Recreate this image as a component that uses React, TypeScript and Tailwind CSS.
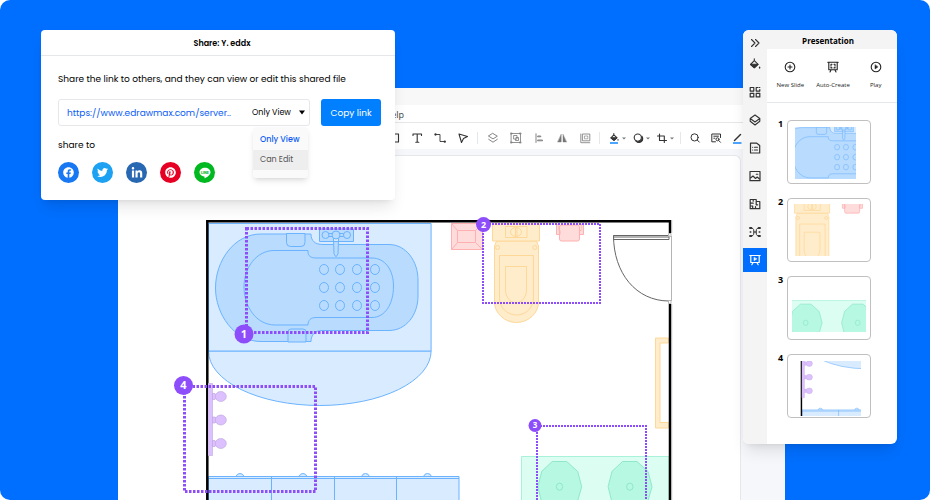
import React, { useState } from 'react';
import { FaFacebook, FaLinkedinIn, FaPinterest, FaTwitter } from 'react-icons/fa';

const accessModes = ['Only View', 'Can Edit'];

const drainHoles = [269, 287, 305].flatMap(y => [324, 340, 357, 375].map(x => ({ x, y })));

function Icon({ children, className = 'w-3 h-3' }: { children: React.ReactNode; className?: string }) {
  return (
    <svg
      viewBox="0 0 12 12"
      className={className}
      fill="none"
      stroke="currentColor"
      strokeWidth="1.1"
      strokeLinecap="round"
      strokeLinejoin="round"
      aria-hidden="true"
    >
      {children}
    </svg>
  );
}

const LineLogo = () => (
  <svg viewBox="0 0 12 12" className="w-3 h-3" aria-hidden="true">
    <path d="M6 .7C3 .7.5 2.700.5 5.200c0 2.200 2 4 4.700 4.400.5.1.4.5.3 1.300 0 .5.3.5.6.3 1.600-1 5.400-3.200 5.400-6C11.500 2.700 9 .7 6 .7Z" fill="#fff" />
    <text x="6" y="6.500" textAnchor="middle" fontSize="3.500" fontWeight="800" fill="#00b81f" fontFamily="Inter, sans-serif">LINE</text>
  </svg>
);

const socials = [
  { name: 'Facebook', color: 'bg-[#1877f2]', icon: <FaFacebook className="w-[11px] h-[11px]" /> },
  { name: 'Twitter', color: 'bg-[#1da1f2]', icon: <FaTwitter className="w-[11px] h-[11px]" /> },
  { name: 'LinkedIn', color: 'bg-[#2867b2]', icon: <FaLinkedinIn className="w-3 h-3" /> },
  { name: 'Pinterest', color: 'bg-[#e60023]', icon: <FaPinterest className="w-[11px] h-[11px]" /> },
  { name: 'Line', color: 'bg-[#00b81f]', icon: <LineLogo /> },
];

const insertTools = [
  { name: 'Rectangle', icon: <Icon><path d="M2 2h8.500v8H2z" /></Icon> },
  { name: 'Text', icon: <Icon><path d="M2 3.500V2h8.500v1.500M6.200 2v8.300M4.800 10.300h3" /></Icon> },
  { name: 'Connector', icon: <Icon><path d="M1.500 2.500h4.500v7h4.500" strokeWidth=".9" /><circle cx="1.500" cy="2.500" r=".6" /><circle cx="10.800" cy="9.700" r=".6" /></Icon> },
  { name: 'Pointer', icon: <Icon><path d="M2 2l8.500 2.500L6.500 6.500 4.500 10.500z" /></Icon> },
];

const arrangeTools = [
  { name: 'Layers', icon: <Icon><path d="M6 1.500l4.300 2.700L6 6.900 1.700 4.200zM1.700 7.300L6 10.200l4.300-2.900" strokeWidth=".9" /></Icon> },
  { name: 'Group', icon: <Icon><path d="M1.500 1.500h9v9h-9zM4 3.500h3v3.500H4zM6 5.500h2.500v3H5.500V7" strokeWidth=".8" /><path d="M.9.900h1.200v1.200H.9zM9.900.9h1.200v1.200H9.900zM.9 9.900h1.200v1.200H.9zM9.900 9.900h1.200v1.200H9.900z" strokeWidth=".6" /></Icon> },
  { name: 'Align', icon: <Icon><path d="M3 1.800v8.700" strokeWidth=".9" /><path d="M5 4h2.800v.8H5zM5 8h4.500v.8H5z" strokeWidth=".9" /></Icon> },
  { name: 'Flip', icon: <Icon><path d="M5.200 2.500V10H1.800zM7 2.500V10h3.400z" fill="currentColor" strokeWidth=".4" /></Icon> },
  { name: 'Size', icon: <Icon><path d="M3.800 2h7v6.800h-7zM1.800 2v8.700h9" strokeWidth=".8" /><path d="M5.800 4h3v2.800h-3z" strokeWidth=".6" /></Icon> },
];

const styleTools = [
  { name: 'Fill', icon: <Icon><path d="M5.800 1.500v1.300L3 5.800l3 2.500 2.900-2.700-3.100-2.800" /><path d="M3 5.800h5.800L6 8.300z" fill="currentColor" /><path d="M10 7.500v.6" /><path d="M2 11h8" stroke="#0080ff" strokeWidth="1.400" strokeLinecap="butt" /></Icon> },
  { name: 'Shadow', icon: <Icon><path d="M9.800 4.200a3.800 3.800 0 0 1-5.800 5c2.800 1.700 7.600-1 5.800-5Z" fill="currentColor" /><circle cx="5.800" cy="5.600" r="3.600" /></Icon> },
  { name: 'Crop', icon: <Icon><path d="M3.500 2v6.500h7M1.500 4h6.800v6.500" /></Icon> },
];

const findTools = [
  { name: 'Search', icon: <Icon><circle cx="5.600" cy="5.400" r="3.600" strokeWidth="1" /><path d="M8.300 8.100l2 2" strokeWidth="1" /></Icon> },
  { name: 'Find in page', icon: <Icon><path d="M5.500 9.800H1.800V2h8.700v3.500M3.800 4.200h4.700M3.800 6.200h1" strokeWidth="1" /><circle cx="7.500" cy="7.300" r="1.500" strokeWidth="1" /><path d="M8.700 8.500l1.800 1.800" strokeWidth="1" /></Icon> },
  { name: 'Line style', icon: <Icon><path d="M3.500 8.500l6-6" strokeWidth="1.500" /><path d="M2 11h8.500" stroke="#0080ff" strokeWidth="1.400" strokeLinecap="butt" /></Icon> },
];

const railItems = [
  { name: 'Fill', icon: <Icon><path d="M5.300.8v1.800L1.500 6.500l3.800 3.300 3.800-3.500-3.800-3.700" /><path d="M1.800 6.300h7.100L5.300 9.700z" fill="currentColor" /><path d="M10.600 9.300v.8" strokeWidth="1.400" /></Icon> },
  { name: 'Symbols', icon: <Icon><path d="M1.200 1.500h3.600v3.600H1.200zM1.200 7.300h3.600v3.600H1.200zM7.200 7.300h3.600v3.600H7.200zM9 1.500H7.200v3.600h3.600V3.500M10.400 1.500h.4" strokeWidth="1.200" /></Icon> },
  { name: 'Layers', icon: <Icon><path d="M6 1l4.800 3.500L6 8 1.200 4.500zM1.200 4.500v2.800L6 11l4.800-3.700V4.500" /></Icon> },
  { name: 'Notes', icon: <Icon><path d="M1.500 1.200h6.300l2.900 2.300v7.500H1.500z" strokeWidth="1.200" /><path d="M3.600 5.200h.1M5.500 5.200h3M3.600 8h.1M5.500 8h3" /></Icon> },
  { name: 'Picture', icon: <Icon><path d="M1 1.500h10v9.200H1z" strokeWidth="1.200" /><path d="M1.500 8l2.500-2 2.500 2.500 1.700-1.500 2.300 2M7.300 4.200h1.500" /></Icon> },
  { name: 'Floor plan', icon: <Icon><path d="M1.200 1.500h6v2h3.600v7.200H1.200zM1.200 5.200h3M4.200 1.500v1.700M7.200 3.500v3.300M1.200 8h2.500v2.700M6.500 10.700V8.600M7.200 6.800h1.500" strokeWidth="1.200" /></Icon> },
  { name: 'Mind map', icon: <Icon><path d="M2 2h1.200Q5 3 5 6T3.200 10H2M10 2H8.800Q7 3 7 6t1.800 4H10M4.500 6h3" strokeWidth="1" /><path d="M1 2h1.300M9.700 2H11M1 10h1.300M9.700 10H11" strokeWidth="1.900" /><path d="M1.200 6h.6M10.200 6h.6" strokeWidth="1.400" /></Icon> },
  { name: 'Presentation', icon: <Icon><path d="M.8 1.500h10.400M1.800 1.500v7h8.400v-7M4 8.700l-1.200 2M8 8.700l1.200 2" strokeWidth="1.200" /><path d="M5 3.500v3.200L7.700 5z" fill="currentColor" strokeWidth=".5" /></Icon> },
];

const slideActions = [
  { name: 'New Slide', icon: <Icon><circle cx="6" cy="6" r="4.800" /><path d="M6 4v4M4 6h4" /></Icon> },
  { name: 'Auto-Create', icon: <Icon><path d="M.8 1.200h10.400M1.800 1.200v7.600h8.400V1.200M4 9l-1 2M8 9l1 2M4 4.500V3.300h1M8 4.500V3.300H7M4 5.700v1.200h1M8 5.700v1.200H7" /></Icon> },
  { name: 'Play', icon: <Icon><circle cx="6" cy="6" r="4.800" /><path d="M5 4v4l2.800-2z" fill="currentColor" strokeWidth=".5" /></Icon> },
];

// Each slide is a window onto the floor plan: its place on the card and the part it shows
const slides = [
  { id: 1, x: 7, y: 6, width: 61, height: 52, view: '248 233 110 94' },
  { id: 2, x: 6, y: 5, width: 69, height: 52, view: '492 229 92 69' },
  { id: 3, x: 4, y: 23, width: 74, height: 32, view: '541 456 100 43' },
  { id: 4, x: 12, y: 6, width: 61, height: 55, view: '205 392 105 95' },
];

const markers = [
  { id: 1, x: 246.5, y: 228.5, width: 121, height: 104, cx: 244, cy: 334, r: 9.5, size: 11, stroke: 3, dash: '2.500 1.500' },
  { id: 2, x: 483, y: 224, width: 117, height: 79, cx: 483.5, cy: 224.5, r: 7.5, size: 9, stroke: 2, dash: '2 1' },
  { id: 3, x: 537, y: 426, width: 109, height: 90, cx: 535, cy: 425.5, r: 6.5, size: 8, stroke: 2, dash: '2 1' },
  { id: 4, x: 184.5, y: 386.5, width: 131, height: 105, cx: 183.5, cy: 385.5, r: 9.5, size: 11, stroke: 3, dash: '2.500 1.500' },
];

function FloorPlan() {
  return (
    <g fill="none">
      {/* Bathtub and mat */}
      <g stroke="#6bb3ff" strokeWidth="1">
        <path d="M208.500 351a111.300 54.500 0 0 0 222.600 0z" fill="#d9ebff" />
        <path d="M208.500 223.500h222.600V351H208.500z" fill="#d9ebff" />
        <path d="M261 234H311C311 241 315 244.500 323 244.500H389C406 244.500 418 261 418 280V296C418 315 406 330.500 389 330.500H322C315 330.500 311 335 311 341.500H261C234 341.500 215.500 314 215.500 288C215.500 261 234 234 261 234Z" fill="#b8dbfe" />
        <path d="M274 250.500H308V252C308 256 311 258 316 258H372C385 258 393.500 270 393.500 286C393.500 304 385 317.500 372 317.500H316C311 317.500 308 320 308 325H275C256 325 244 306 244 287C244 267 257 250.500 274 250.500Z" />
        <path d="M286.500 233.500h18.500v9q0 4-4 4h-10.500q-4 0-4-4zM288 342v-10q0-3 3-3h12q3 0 3 3v10z" fill="#b8dbfe" />
        {drainHoles.map(hole => (
          <ellipse key={`${hole.x}-${hole.y}`} cx={hole.x} cy={hole.y + 0.5} rx="4.500" ry="5" />
        ))}
        <path d="M319.500 229h34v12.500h-34zM328.500 233.500h15v3h-15zM333.500 238.500l.5 15q2 6 4 0l.5-15z" fill="#b8dbfe" />
        <circle cx="325.500" cy="235" r="3.500" fill="#b8dbfe" />
        <circle cx="347" cy="235" r="3.500" fill="#b8dbfe" />
        <circle cx="336" cy="235" r="4" fill="#b8dbfe" />
      </g>

      {/* Cabinets */}
      <g stroke="#6bb3ff">
        <path d="M236 476.500q1-3 4-3t4 3M299 476.500q1-3 4-3t4 3M361.500 476.500q1-3 4-3t4 3M423.500 476.500q1-3 4-3t4 3" fill="#d9ebff" />
        <path d="M208.500 476.500H459V520H208.500z" fill="#d9ebff" />
        <path d="M208.500 478.500H459M271.500 477V520M334.500 477V520M396.500 477V520" />
      </g>

      {/* Stool and chair */}
      <g fill="#ffdcdc" stroke="#ffb0b0">
        <path d="M451.500 223.500h31v26h-31z" />
        <path d="M457.500 230.500h18v12h-18zM451.500 223.500l6 7M482.500 223.500l-7 7M451.500 249.500l6-7M482.500 249.500l-7-7" />
        <path d="M556.500 224.500h2.500v6h1v4h-3.500zM583.500 224.500H581v6h-1.500v4h4zM559.500 227q0-2 2-2h16q2 0 2 2v12q0 2-2 2h-16q-2 0-2-2z" />
      </g>

      {/* Toilet and shelf */}
      <g fill="#ffeccb" stroke="#fdd899">
        <path d="M496.500 241h40l2 5v56c0 11-10 20.500-22 20.500s-22-9.500-22-20.500v-56z" />
        <path d="M492.500 224h47v17h-47zM505.500 226.500h21.500v11h-21.500z" />
        <ellipse cx="516" cy="232" rx="5.500" ry="4.500" />
        <path d="M515.500 228v8M517 228v8M499.500 255.500h34V298c0 10-8 17-17 17s-17-7-17-17zM505.500 266.500h21V290c0 7-5 13-10.500 13s-10.500-6-10.500-13z" />
        <circle cx="497.500" cy="247.500" r="2" />
        <circle cx="534.800" cy="247.500" r="2" />
        <path d="M668.500 338h-13v90h13v-5.500h-8.500V343h8.500z" />
      </g>

      {/* Basins */}
      <g stroke="#90e8cb">
        <path d="M521.500 456.500h147.500V520H521.500z" fill="#dbfdf2" stroke="#a9f2da" />
        {[0, 70.3].map(shift => (
          <g key={shift} transform={`translate(${shift} 0)`} fill="#b6f8e2">
            <path d="M552.300 461.500h14.400l11 10 4 15.200-4 14-11 11h-14.400l-11-11-3.500-14 4-15.400z" />
            <ellipse cx="559.500" cy="486.700" rx="3.200" ry="3.600" />
          </g>
        ))}
      </g>

      {/* Walls */}
      <path d="M207.300 520V221.200H670V233M670 304V520" stroke="#000" strokeWidth="2.500" />
      <path d="M671.700 220v13M671.700 304v216" stroke="#b5b5b5" />

      {/* Wall lamps */}
      <path d="M208.500 383.500h4v72h-4z" fill="#dcc0ff" stroke="#d3bdec" />
      {[396.500, 420, 443.500].map(y => (
        <g key={y} fill="#dcc0ff" stroke="#bba2d8" strokeWidth=".6">
          <path d={`M212.500 ${y - 3}h2.500l1.500 1.500v3l-1.500 1.500h-2.500z`} />
          <ellipse cx="220.800" cy={y} rx="5.500" ry="5" />
        </g>
      ))}

      {/* Door */}
      <path d="M613.500 235.500H669v4H613.500zC613.500 273 636 301 669 301M613.500 237H669" stroke="#666" />
      <path d="M668.500 233.500h2.500v3h-2.500zM668.500 300.500h2.500v3h-2.500zM671.500 236v65" stroke="#b5b5b5" />
    </g>
  );
}

function Marker({ marker }: { marker: typeof markers[number] }) {
  return (
    <g>
      <rect
        x={marker.x}
        y={marker.y}
        width={marker.width}
        height={marker.height}
        fill="none"
        stroke="#8e4dfa"
        strokeWidth={marker.stroke}
        strokeDasharray={marker.dash}
      />
      <circle cx={marker.cx} cy={marker.cy} r={marker.r} fill="#8e4dfa" />
      <text
        x={marker.cx}
        y={marker.cy + marker.size * 0.36}
        textAnchor="middle"
        fontSize={marker.size}
        className="fill-white font-bold font-['Open_Sans',sans-serif]"
      >
        {marker.id}
      </text>
    </g>
  );
}

function ToolGroup({ tools, className, caret }: { tools: { name: string; icon: React.ReactNode }[]; className: string; caret?: boolean }) {
  return (
    <>
      {tools.map(tool => (
        <button key={tool.name} aria-label={tool.name} className={`h-6 shrink-0 flex items-center justify-center ${className}`}>
          {tool.icon}
          {caret && (
            <svg viewBox="0 0 4 3" className="w-1 h-[3px] ml-0.5" aria-hidden="true">
              <path d="M0 .5h4L2 2.500z" fill="#777" />
            </svg>
          )}
        </button>
      ))}
    </>
  );
}

const Separator = () => <span className="w-px h-3 mx-[3px] bg-gray-200 shrink-0" />;

function Editor() {
  return (
    <section className="flex-1 flex flex-col bg-white overflow-hidden">
      <div className="h-[17px] bg-[#f8f8f8] shrink-0" />
      <nav className="h-[18px] shrink-0 border-b border-gray-200">
        <div className="w-[286px] flex justify-end">
          <button className="text-[9px] leading-5 text-[#444] font-['Open_Sans',sans-serif]">Help</button>
        </div>
      </nav>
      <div className="h-[26px] shrink-0 flex items-center pl-[264px] pt-1 text-[#333]">
        <ToolGroup tools={insertTools} className="w-[23px]" />
        <Separator />
        <ToolGroup tools={arrangeTools} className="w-[23px] text-[#777]" />
        <Separator />
        <div className="flex items-center shrink-0 pl-0.5">
          <ToolGroup tools={styleTools} className="w-6" caret />
        </div>
        <Separator />
        <ToolGroup tools={findTools} className="w-[21px]" />
      </div>
      <div className="flex-1 pt-1.5 pr-11 bg-[#f5f7fa]">
        <div className="h-full bg-white border-t border-r border-gray-200 rounded-tr-md overflow-hidden">
          <svg viewBox="118 156 622 344" className="w-[622px] h-[344px] max-w-none block" role="img" aria-label="Bathroom floor plan">
            <FloorPlan />
            {markers.map(marker => (
              <Marker key={marker.id} marker={marker} />
            ))}
          </svg>
        </div>
      </div>
    </section>
  );
}

function ShareDialog() {
  const [access, setAccess] = useState('Only View');

  return (
    <section className="absolute left-[41px] top-[30px] w-[354px] bg-white rounded shadow-lg text-[9px] leading-4 text-black font-[Poppins,Inter,sans-serif]">
      <h2 className="h-[26px] pt-0.5 pl-2 flex items-center justify-center border-b border-gray-200 text-[8px] font-semibold">Share: Y. eddx</h2>
      <div className="pl-[17px] pr-3.5 pt-[15px] pb-[17px] relative">
        <p className="whitespace-nowrap">Share the link to others, and they can view or edit this shared file</p>
        <div className="flex gap-[11px] mt-3 h-[27px]">
          <div className="w-[252px] shrink-0 flex items-center rounded-[3px] border border-gray-200">
            <input
              aria-label="Share link"
              readOnly
              value="https://www.edrawmax.com/server.."
              className="flex-1 min-w-0 pl-2 text-[#0a5cf5] outline-none"
            />
            <div className="relative w-[57px] flex items-center shrink-0">
              <select
                aria-label="Access"
                value={access}
                onChange={e => setAccess(e.target.value)}
                className="appearance-none w-full outline-none text-[8px]"
              >
                {accessModes.map(mode => (
                  <option key={mode}>{mode}</option>
                ))}
              </select>
              <svg viewBox="0 0 6 5" className="absolute right-1 w-1.5 h-[5px] pointer-events-none" aria-hidden="true">
                <path d="M0 .5h6L3 4.500z" />
              </svg>
            </div>
          </div>
          <button className="flex-1 rounded-[3px] bg-[#0080ff] text-white whitespace-nowrap">Copy link</button>
        </div>
        <p className="mt-[11px]">share to</p>
        <div className="flex gap-[13px] mt-[9px]">
          {socials.map(social => (
            <a
              key={social.name}
              href="#"
              aria-label={social.name}
              className={`w-[21px] h-[21px] rounded-full flex items-center justify-center text-white ${social.color}`}
            >
              {social.icon}
            </a>
          ))}
        </div>
        <ul className="absolute right-[87px] top-[71px] w-[55px] pb-2 bg-[#fafafa] rounded-[3px] shadow-md text-[8px]">
          {accessModes.map(mode => (
            <li key={mode}>
              <button
                onClick={() => setAccess(mode)}
                className={`w-full pl-[7px] text-left leading-5 ${mode === access ? 'pt-[3px] text-[#0a5cf5] font-medium' : 'bg-[#eeeeee] text-[#555]'}`}
              >
                {mode}
              </button>
            </li>
          ))}
        </ul>
      </div>
    </section>
  );
}

function PresentationPanel() {
  return (
    <section className="absolute right-[33px] top-[30px] w-[154px] flex bg-white rounded-md overflow-hidden shadow-lg text-black font-['Open_Sans',sans-serif]">
      <aside className="w-6 shrink-0 bg-[#f4f4f4] text-[#333]">
        <button aria-label="Collapse" className="w-6 h-[22px] pt-1 flex items-center justify-center">
          <Icon><path d="M2.500 2.500L6 6 2.500 9.500M6.500 2.500L10 6 6.500 9.500" /></Icon>
        </button>
        <div className="flex flex-col gap-1">
          {railItems.map(item => (
            <button
              key={item.name}
              aria-label={item.name}
              className={`w-6 h-6 flex items-center justify-center ${item.name === 'Presentation' ? 'bg-[#006fff] text-white' : ''}`}
            >
              {item.icon}
            </button>
          ))}
        </div>
      </aside>
      <div className="flex-1">
        <h2 className="h-[19px] pr-2 flex items-center justify-center bg-[#f4f4f4] pt-0.5 text-[8px] font-bold">Presentation</h2>
        <div className="h-[54px] pt-3 pl-0.5 grid grid-cols-3 border-b border-gray-200 text-[#222]">
          {slideActions.map(action => (
            <button key={action.name} className="h-9 flex flex-col items-center gap-1.5 text-[6px] leading-3 whitespace-nowrap">
              {action.icon}
              {action.name}
            </button>
          ))}
        </div>
        <ol className="flex flex-col gap-3.5 pt-[17px] pb-[26px] pl-[11px]">
          {slides.map(slide => (
            <li key={slide.id} className="flex">
              <span className="w-[9px] text-[9px] leading-2 font-bold">{slide.id}</span>
              <svg viewBox="0 0 82 62" className="box-content w-[82px] h-[62px] border border-[#c0c0c0] rounded" role="img" aria-label={`Slide ${slide.id}`}>
                <svg x={slide.x} y={slide.y} width={slide.width} height={slide.height} viewBox={slide.view}>
                  <FloorPlan />
                </svg>
              </svg>
            </li>
          ))}
        </ol>
      </div>
    </section>
  );
}

export default function App() {
  return (
    <div className="bg-white">
      <main className="relative min-h-screen flex flex-col bg-[#006fff] rounded-[10px] overflow-hidden pt-[88px] pl-[118px] pr-[145px]">
        <Editor />
        <ShareDialog />
        <PresentationPanel />
      </main>
    </div>
  );
}
